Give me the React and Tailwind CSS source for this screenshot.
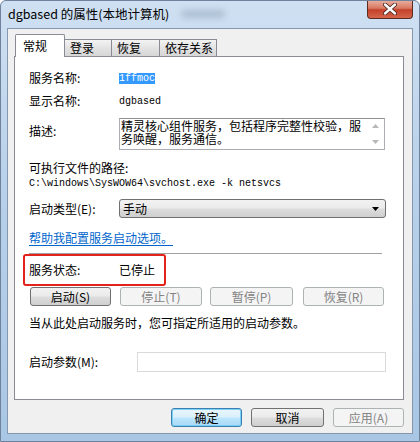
import React from "react";

const cjk = "font-['Microsoft_YaHei','Noto_Sans_CJK_SC',sans-serif]";
const mono = "font-['Liberation_Mono','Noto_Sans_CJK_SC',monospace]";

const Btn = ({ children, w, disabled, primary, className = "" }) => {
  let look =
    "border-[#707070] bg-[linear-gradient(#f2f2f2_0%,#ebebeb_48%,#dddddd_52%,#cfcfcf_100%)] text-black";
  if (disabled) look = "border-[#adb2b5] bg-[#f4f4f4] text-[#838383]";
  if (primary)
    look =
      "border-[#3c7fb1] bg-[linear-gradient(#eaf6fd_0%,#d9f0fc_48%,#bee6fd_52%,#a7d9f5_100%)] text-black shadow-[inset_0_0_0_1px_#7ad0f5]";
  return (
    <div
      className={`h-[19px] ${w} flex items-center justify-center rounded-[3px] border text-[12px] leading-none ${look} ${className}`}
    >
      {children}
    </div>
  );
};

const Tab = ({ label, w, active }) =>
  active ? (
    <div
      className={`relative z-10 h-[23px] ${w} flex items-center pl-[7px] bg-white border border-b-0 border-[#898c95] rounded-t-[2px] text-[12px]`}
    >
      {label}
    </div>
  ) : (
    <div
      className={`h-[18px] ${w} flex items-center pl-[5px] border border-l-0 border-[#898c95] bg-[linear-gradient(#f3f3f3,#e3e3e3_50%,#d6d6d6)] text-[12px]`}
    >
      {label}
    </div>
  );

export default function App() {
  return (
    <div
      className={`w-[420px] h-[442px] overflow-hidden rounded-t-[6px] border border-[#6f829b] bg-[linear-gradient(#cfe0f2,#b9d1ea_40%,#a9c6e5)] ${cjk} text-black`}
    >
      {/* title bar */}
      <div className="h-[27px] flex items-start">
        <div className="pl-[7px] pt-[5px] text-[12.5px] leading-[16px] text-black">
          dgbased 的属性(本地计算机)
        </div>
        <div className="ml-[12px] mt-[9px] w-[44px] h-[8px] rounded-full bg-[#7f8fa3] opacity-40 blur-[3px]" />
        <div className="ml-auto mr-[6px] w-[46px] h-[19px] mt-[-1px] flex items-center justify-center rounded-b-[4px] border border-t-0 border-[#5b2a21] bg-[linear-gradient(#eab2a4_0%,#d97a63_45%,#c4402a_55%,#d6664c_100%)]">
          <svg width="14" height="12" viewBox="0 0 14 12">
            <path d="M2 1.5 L12 10.5 M12 1.5 L2 10.5" stroke="#3d1d18" strokeWidth="4" strokeLinecap="round" />
            <path d="M2 1.5 L12 10.5 M12 1.5 L2 10.5" stroke="#ffffff" strokeWidth="2.4" strokeLinecap="round" />
          </svg>
        </div>
      </div>

      {/* client area */}
      <div className="ml-[6px] w-[406px] h-[406px] border border-[#8798ae] bg-[#f0f0f0] pt-[5px] pl-[6px]">
        <div className="ml-[1px] flex items-end">
          <Tab label="常规" w="w-[50px]" active />
          <Tab label="登录" w="w-[47px]" />
          <Tab label="恢复" w="w-[48px]" />
          <Tab label="依存关系" w="w-[57px]" />
        </div>

        <div className="relative mt-[-1px] w-[390px] h-[344px] border border-[#898c95] bg-white pl-[14px] pt-[13px] flex flex-col text-[12px]">
          <div className="h-[16px] flex items-center">
            <div className="w-[90px]">服务名称:</div>
            <span className={`${mono} text-[10px] leading-[11px] bg-[#3399ff] text-white`}>1ffmoc</span>
          </div>

          <div className="mt-[7px] h-[16px] flex items-center">
            <div className="w-[90px]">显示名称:</div>
            <span className={`${mono} text-[10px]`}>dgbased</span>
          </div>

          <div className="mt-[9px] flex items-start">
            <div className="w-[90px] pt-[4px]">描述:</div>
            <div className="w-[266px] h-[32px] border border-[#abadb3] border-t-[#8d8e92] flex">
              <div className="flex-1 pl-[1px] pt-[1px] text-[12px] leading-[12.5px]">
                精灵核心组件服务，包括程序完整性校验，服务唤醒，服务通信。
              </div>
              <div className="w-[17px] flex flex-col items-center justify-between py-[5px]">
                <svg width="7" height="4" viewBox="0 0 7 4">
                  <path d="M0 4 L3.5 0 L7 4 Z" fill="#b8b8b8" />
                </svg>
                <svg width="7" height="4" viewBox="0 0 7 4">
                  <path d="M0 0 L3.5 4 L7 0 Z" fill="#b8b8b8" />
                </svg>
              </div>
            </div>
          </div>

          <div className="mt-[10px] h-[16px] flex items-center">可执行文件的路径:</div>
          <div className={`h-[14px] flex items-center ${mono} text-[10px]`}>
            C:\windows\SysWOW64\svchost.exe -k netsvcs
          </div>

          <div className="mt-[9px] flex items-center">
            <div className="w-[90px]">启动类型(E):</div>
            <div className="w-[267px] h-[19px] rounded-[3px] border border-[#707070] bg-[linear-gradient(#f2f2f2_0%,#ebebeb_48%,#dddddd_52%,#cfcfcf_100%)] flex items-center pl-[3px] pr-[6px]">
              <span>手动</span>
              <svg className="ml-auto" width="7" height="4" viewBox="0 0 7 4">
                <path d="M0 0 L7 0 L3.5 4 Z" fill="#000" />
              </svg>
            </div>
          </div>

          <div className="mt-[12px] h-[16px] flex items-center">
            <span className="text-[#0066cc] underline underline-offset-[2px]">帮助我配置服务启动选项。</span>
          </div>

          <div className="mt-[7px] w-[353px] h-px bg-[#a0a0a0]" />

          <div className="-ml-[6px] w-[143px] h-[32px] rounded-[3px] border-2 border-[#e3221c] flex items-center pl-[4px]">
            <div className="w-[90px]">服务状态:</div>
            <div>已停止</div>
          </div>

          <div className="mt-[1px] ml-[1px] flex">
            <Btn w="w-[81px]">启动(S)</Btn>
            <Btn w="w-[82px]" disabled className="ml-[9px]">停止(T)</Btn>
            <Btn w="w-[83px]" disabled className="ml-[8px]">暂停(P)</Btn>
            <Btn w="w-[81px]" disabled className="ml-[10px]">恢复(R)</Btn>
          </div>

          <div className="mt-[9px] h-[16px] flex items-center">
            当从此处启动服务时，您可指定所适用的启动参数。
          </div>

          <div className="mt-[21px] flex items-center">
            <div className="w-[108px]">启动参数(M):</div>
            <div className="w-[249px] h-[20px] border border-[#dadada] bg-white" />
          </div>
        </div>

        <div className="mt-[8px] w-[390px] flex justify-end gap-[9px]">
          <Btn w="w-[71px]" primary>确定</Btn>
          <Btn w="w-[73px]">取消</Btn>
          <Btn w="w-[71px]" disabled>应用(A)</Btn>
        </div>
      </div>
    </div>
  );
}
